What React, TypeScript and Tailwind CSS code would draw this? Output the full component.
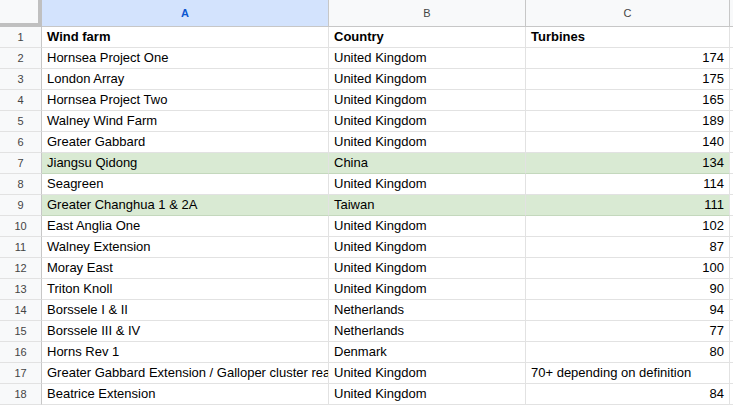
const rows: [string, string, string, boolean?][] = [
  ['Hornsea Project One', 'United Kingdom', '174'],
  ['London Array', 'United Kingdom', '175'],
  ['Hornsea Project Two', 'United Kingdom', '165'],
  ['Walney Wind Farm', 'United Kingdom', '189'],
  ['Greater Gabbard', 'United Kingdom', '140'],
  ['Jiangsu Qidong', 'China', '134', true],
  ['Seagreen', 'United Kingdom', '114'],
  ['Greater Changhua 1 & 2A', 'Taiwan', '111', true],
  ['East Anglia One', 'United Kingdom', '102'],
  ['Walney Extension', 'United Kingdom', '87'],
  ['Moray East', 'United Kingdom', '100'],
  ['Triton Knoll', 'United Kingdom', '90'],
  ['Borssele I & II', 'Netherlands', '94'],
  ['Borssele III & IV', 'Netherlands', '77'],
  ['Horns Rev 1', 'Denmark', '80'],
  ['Greater Gabbard Extension / Galloper cluster read', 'United Kingdom', '70+ depending on definition'],
  ['Beatrice Extension', 'United Kingdom', '84'],
];

const cell = 'h-[21px] shrink-0 border-r border-b border-[#e2e2e2] px-[5px] leading-[20px] overflow-hidden whitespace-nowrap';

export default function App() {
  return (
    <div className="h-[409px] w-[733px] overflow-hidden bg-white text-[13px] text-black" style={{ fontFamily: '"Liberation Sans", Arial, sans-serif' }}>
      <div className="flex h-[27px] text-[11px] text-[#444]">
        <div className="w-[42px] shrink-0 border-r-4 border-b-4 border-[#c0c0c0] bg-[#f8f9fa]" />
        <div className="flex w-[287px] shrink-0 items-center justify-center border-r border-b border-[#c7c7c7] bg-[#d3e3fd] font-bold text-[#0b57d0]">A</div>
        <div className="flex w-[197px] shrink-0 items-center justify-center border-r border-b border-[#c7c7c7] bg-[#f8f9fa]">B</div>
        <div className="flex w-[204px] shrink-0 items-center justify-center border-r border-b border-[#c7c7c7] bg-[#f8f9fa]">C</div>
        <div className="flex-1 border-b border-[#c7c7c7] bg-[#f8f9fa]" />
      </div>
      <div className="flex">
        <div className={`${cell} w-[42px] border-r-[#c7c7c7] bg-[#f8f9fa] text-center text-[11px] text-[#444]`}>1</div>
        <div className={`${cell} w-[287px] font-bold`}>Wind farm</div>
        <div className={`${cell} w-[197px] font-bold`}>Country</div>
        <div className={`${cell} w-[204px] font-bold`}>Turbines</div>
        <div className={`${cell} flex-1`} />
      </div>
      {rows.map(([a, b, c, hl], i) => {
        const bg = hl ? 'bg-[#d9ead3] border-b-[#c4d8bd]' : '';
        const isText = isNaN(Number(c.replace('+', 'x')));
        return (
          <div key={i} className="flex">
            <div className={`${cell} w-[42px] border-r-[#c7c7c7] bg-[#f8f9fa] text-center text-[11px] text-[#444]`}>{i + 2}</div>
            <div className={`${cell} w-[287px] ${bg}`}>{a}</div>
            <div className={`${cell} w-[197px] ${bg}`}>{b}</div>
            <div className={`${cell} w-[204px] ${bg} ${isText ? 'text-left' : 'text-right'}`}>{c}</div>
            <div className={`${cell} flex-1`} />
          </div>
        );
      })}
    </div>
  );
}
